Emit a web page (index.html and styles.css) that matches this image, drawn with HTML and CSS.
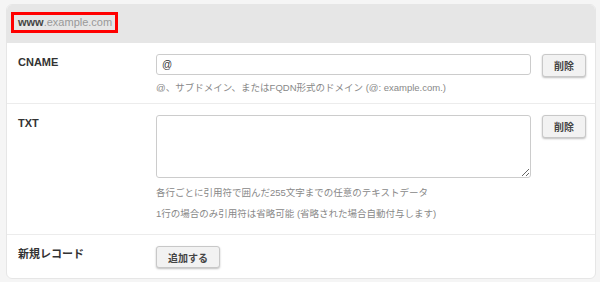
FILE: index.html
```html
<!DOCTYPE html>
<html lang="ja">
<head>
    <meta charset="UTF-8">
    <meta name="viewport" content="width=device-width, initial-scale=1.0">
    <title>DNSレコード設定</title>
    <link rel="stylesheet" href="styles.css">
</head>
<body>
    <div class="card">
        <div class="card-header">
            <div class="domain-box"><b>www</b>.example.com</div>
        </div>

        <div class="record-row">
            <div class="record-label">CNAME</div>
            <div class="record-field">
                <div class="field-line">
                    <input class="text-input" type="text" value="@">
                    <button class="button">削除</button>
                </div>
                <p class="help">@、サブドメイン、またはFQDN形式のドメイン (@: example.com.)</p>
            </div>
        </div>

        <div class="record-row">
            <div class="record-label">TXT</div>
            <div class="record-field">
                <div class="field-line">
                    <textarea class="text-area"></textarea>
                    <button class="button">削除</button>
                </div>
                <p class="help help-first">各行ごとに引用符で囲んだ255文字までの任意のテキストデータ</p>
                <p class="help">1行の場合のみ引用符は省略可能 (省略された場合自動付与します)</p>
            </div>
        </div>

        <div class="record-row last-row">
            <div class="record-label">新規レコード</div>
            <div class="record-field">
                <button class="button add-button">追加する</button>
            </div>
        </div>
    </div>
</body>
</html>
```

FILE: styles.css
```css
body {
    font-family: "Liberation Sans", "Noto Sans CJK JP", sans-serif;
    background-color: #f5f5f5;
    color: #333;
    margin: 0;
}
.card {
    margin: 4px 4px 0 6px;
    background-color: #fff;
    border: 1px solid #e6e6e6;
    border-radius: 6px;
    overflow: hidden;
}
.card-header {
    background-color: #e6e6e6;
    height: 38px;
    padding: 7px 0 0 4px;
    box-sizing: border-box;
}
.domain-box {
    display: inline-block;
    border: 3px solid #ff0000;
    height: 21px;
    box-sizing: border-box;
    padding: 0 3px 0 4px;
    font-size: 11px;
    line-height: 15px;
    color: #999;
}
.domain-box b {
    color: #444;
}
.record-row {
    display: flex;
    border-top: 1px solid #ececec;
    padding: 11px 9px 0 11px;
}
.record-row:nth-child(2) {
    border-top: none;
    height: 60px;
    box-sizing: border-box;
}
.record-row:nth-child(3) {
    height: 131px;
    box-sizing: border-box;
}
.last-row {
    height: 44px;
    box-sizing: border-box;
}
.record-label {
    width: 138px;
    font-size: 11px;
    font-weight: bold;
    line-height: 16px;
    flex-shrink: 0;
}
.record-field {
    flex: 1;
}
.field-line {
    display: flex;
    align-items: flex-start;
    gap: 11px;
}
.text-input {
    flex: 1;
    height: 21px;
    box-sizing: border-box;
    border: 1px solid #ccc;
    border-radius: 3px;
    padding: 0 5px;
    font-family: inherit;
    font-size: 10px;
    color: #333;
}
.text-area {
    flex: 1;
    height: 63px;
    box-sizing: border-box;
    border: 1px solid #ccc;
    border-radius: 3px;
    resize: vertical;
    font-family: inherit;
}
.button {
    width: 44px;
    height: 23px;
    box-sizing: border-box;
    background-color: #f2f2f2;
    border: 1px solid #c8c8c8;
    border-radius: 3px;
    box-shadow: 0 1px 2px rgba(0, 0, 0, 0.25);
    font-family: inherit;
    font-size: 10px;
    font-weight: bold;
    color: #444;
    padding: 0;
    flex-shrink: 0;
}
.add-button {
    width: 64px;
    height: 22px;
}
.help {
    margin: 3px 0 0 0;
    font-size: 9.5px;
    line-height: 16px;
    color: #888;
}
.help-first {
    margin-top: 7px;
}
.help + .help {
    margin-top: 5px;
}
```
